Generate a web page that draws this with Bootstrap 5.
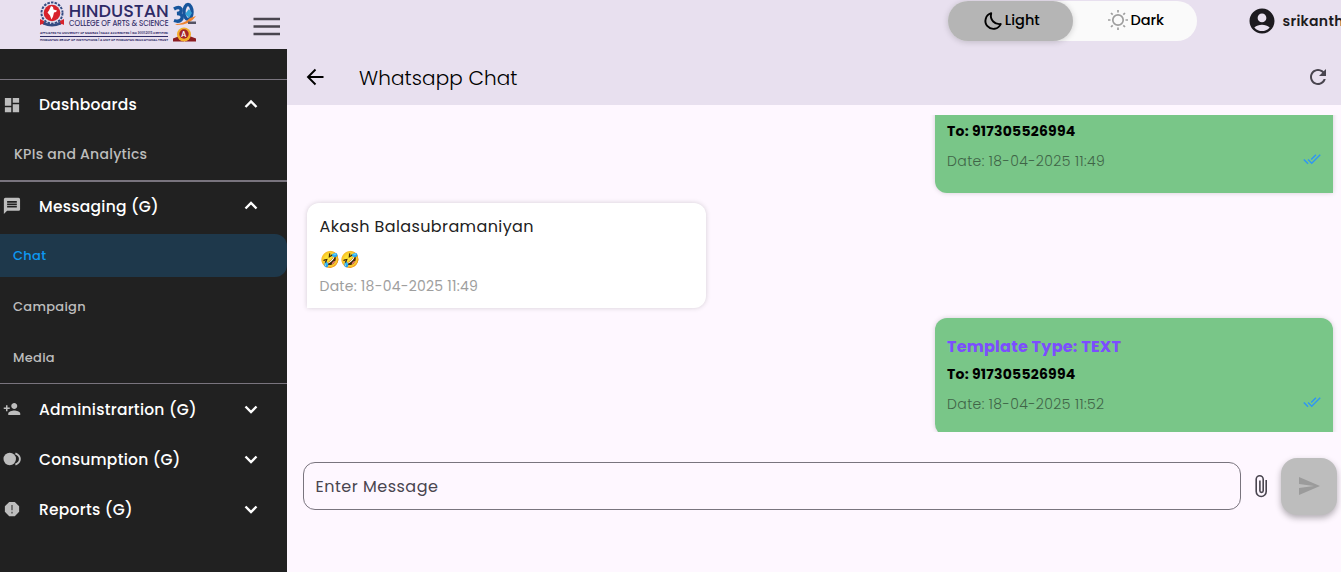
<!DOCTYPE html>
<html lang="en">
<head>
<meta charset="utf-8">
<meta name="viewport" content="width=device-width, initial-scale=1">
<title>Whatsapp Chat</title>
<link href="https://cdn.jsdelivr.net/npm/bootstrap@5.3.0/dist/css/bootstrap.min.css" rel="stylesheet">
<style>
body{font-family:Poppins,Inter,"Liberation Sans",sans-serif;background:#fef7ff;color:#000;line-height:1.5}
svg{display:block;flex:none}
.side{width:287px;flex:none;background:#212121}
.brandbar{height:49px;background:#e8e0ef;padding-left:39px}
.menu-btn{margin-left:50px;margin-top:6px}
.spacer{height:31px;border-bottom:1px solid #79747e}
.group-row{height:50px;padding:0 29px 0 3px;color:#fff;font-weight:500;font-size:15.5px;letter-spacing:.25px;text-decoration:none}
.group-row .ico{width:18px;margin-right:18px;color:#bdbdbd}
.group-row .chev{margin-left:auto}
.group-row.closed{padding-top:2px}
.sub{height:43px;margin-bottom:8px;padding-left:13px;color:#bdbdbd;font-size:13px;font-weight:500;letter-spacing:.28px;text-decoration:none;border-radius:0 12px 12px 0}
.sub.active{background:#1e384b;color:#0d99f2}
.kpi{height:50px;padding:0 14px 2px;color:#bdbdbd;font-size:14px;font-weight:500;letter-spacing:.26px;text-decoration:none}
.rule2{height:2px;background:#79747e}
.rule1{height:1px;background:#79747e}
.topbar{height:105px;background:#e8e0ef}
.toprow{height:49px;padding-top:1px}
.theme{width:249px;height:40px;border-radius:20px;background:#fafafa;margin-left:661px;flex:none;font-size:14.5px;font-weight:500}
.theme .opt{width:124.5px;height:40px;border-radius:20px}
.theme .on{background:#b5b5b5;box-shadow:0 1px 6px rgba(0,0,0,.18)}
.user{margin-left:50px;font-size:14px;font-weight:600;letter-spacing:.3px;color:#1d1b20;white-space:nowrap}
.titlebar{height:56px;padding:0 11px 0 19px}
.page-name{font-size:20px;font-weight:300;letter-spacing:.1px;margin-left:33px;margin-top:2px}
.chat{height:317px;margin-top:10px;overflow:hidden;padding:0 8px 0 8px}
.bubble{width:398.500px;flex:none;padding:13px 12px 13px 12.500px;box-shadow:0 0 5px rgba(0,0,0,.17)}
.out{background:#79c688;height:118px;padding-top:14px;border-radius:12px 12px 0 12px}
.in{background:#fff;height:105px;margin-left:12px;border-radius:12px 12px 12px 0;padding-top:12px}
.tpl{font-size:16px;font-weight:700;color:#7c4dff;line-height:30px;letter-spacing:.24px}
.to{font-size:14px;font-weight:700;line-height:25px;letter-spacing:.22px}
.date-row{font-size:14px;font-weight:300;color:#3f6447;line-height:21px;letter-spacing:.4px}
.out .date-row{margin-top:7px}
.who{font-size:16px;color:#212121;line-height:24px;letter-spacing:.39px}
.emo{font-size:16px;line-height:24px;margin-top:9px}
.in .date-row{color:#9e9e9e;font-weight:400;margin-top:4px;letter-spacing:.25px}
.composer{margin-top:25px;padding:0 4px 0 16px}
.msg{width:938px;height:48px;border:1px solid #79747e;border-radius:12px;background:transparent;padding:0 11.500px;font-size:16px;letter-spacing:.5px;color:#49454f;outline:none}
.msg::placeholder{color:#49454f;opacity:1}
.send{width:56px;height:57px;border:0;border-radius:16px;background:#bdbdbd;box-shadow:0 3px 6px rgba(0,0,0,.3);padding:0 0 1px;margin-left:12px}
</style>
</head>
<body class="overflow-hidden">
<div class="d-flex vh-100 overflow-hidden">
 <aside class="side d-flex flex-column">
  <div class="brandbar d-flex align-items-center">
   <svg width="158" height="45" viewBox="0 0 158 45" style="margin-top:-2px">
    <g>
     <circle cx="13" cy="12" r="10.500" fill="none" stroke="#344b82" stroke-width="2" stroke-dasharray="2.5 1.2"/>
     <circle cx="13" cy="12" r="9.300" fill="#dde3f2"/>
     <circle cx="13" cy="12" r="8.300" fill="#d8232c"/>
     <path d="M12 5l2 1 .5 2.500 3.500 1-1 1.500-2 .5-1 4-1.500 3-1.500-4-2.500-3 1.500-2z" fill="#fff"/>
     <path d="M1 18l4 2 1 4-3-1-2 1z" fill="#d8232c"/><path d="M25 18l-4 2-1 4 3-1 2 1z" fill="#d8232c"/>
     <path d="M5 20.500q8 5 16 0l1 3q-9 4-18 0z" fill="#344b82"/>
    </g>
    <g fill="#2e2a66" font-family="Poppins, Lato, sans-serif">
     <text x="29.800" y="15.500" font-size="18" font-weight="500" textLength="100" lengthAdjust="spacingAndGlyphs">HINDUSTAN</text>
     <text x="30" y="24.700" font-size="8.200" font-weight="400" textLength="99.500" lengthAdjust="spacingAndGlyphs" stroke="#2e2a66" stroke-width=".12">COLLEGE OF ARTS &amp; SCIENCE</text>
     <text x="1" y="32.500" font-size="3" font-weight="600" textLength="128" lengthAdjust="spacingAndGlyphs">AFFILIATED TO UNIVERSITY OF MADRAS | NAAC ACCREDITED | ISO 9001:2015 CERTIFIED</text>
     <rect x="1" y="35" width="128" height="1"/>
     <text x="1" y="40.300" font-size="3" font-weight="600" textLength="128" lengthAdjust="spacingAndGlyphs">HINDUSTAN GROUP OF INSTITUTIONS | A UNIT OF HINDUSTAN EDUCATIONAL TRUST</text>
    </g>
    <g fill="none" stroke="#17559c" stroke-width="3.400">
     <path d="M135 8q5-3 7 0 1 4-4 4.500 6 0 5 5-2 4-8 2"/>
     <ellipse cx="149" cy="11" rx="4" ry="7.500"/>
    </g>
    <path d="M146 13l4-5 3 4-3 5z" fill="#35a3d6"/>
    <path d="M136 23q9 0 15-6l6-2q-6 9-19 9z" fill="#ee8431"/>
    <path d="M149 20.500h8v2.500h-8z" fill="#555465"/>
    <path d="M134 37.500l8-3 4 6-12 0zM157 37.500l-8-3-4 6 12 0z" fill="#8c1d22"/>
    <circle cx="145" cy="33.500" r="7" fill="#f3ae2c"/>
    <circle cx="145" cy="33" r="4.700" fill="#a3232a"/>
    <text x="142.300" y="35.700" font-size="7" font-weight="700" fill="#fff" font-family="Lato, sans-serif">A</text>
   </svg>
   <svg class="menu-btn" width="40" height="40" viewBox="0 0 40 40"><path d="M6.500 11h26.500M6.500 18.500h26.500M6.500 26h26.500" stroke="#49454f" stroke-width="2.700"/></svg>
  </div>
  <div class="spacer"></div>
  <a class="group-row d-flex align-items-center" href="#"><span class="ico"><svg width="18" height="18" viewBox="0 0 24 24" fill="currentColor" style="margin-top:-1px"><path d="M2.500 13h8.500V2.500H2.500V13zm0 8.500h8.500v-6.500H2.500v6.500zm10.500 0h8.500V11h-8.500v10.500zm0-19v6.500h8.500V2.500h-8.500z"/></svg></span><span>Dashboards</span><svg class="chev" width="14" height="14" viewBox="0 0 14 14"><path d="M1.500 9L7 3.500l5.500 5.500" fill="none" stroke="#fff" stroke-width="2.400"/></svg></a>
  <a class="kpi d-flex align-items-center" href="#">KPIs and Analytics</a>
  <div class="rule2"></div>
  <a class="group-row d-flex align-items-center" href="#"><span class="ico"><svg width="18" height="18" viewBox="0 0 24 24" fill="currentColor" style="margin-top:-2px"><path d="M20 2H4c-1.100 0-1.990.9-1.990 2L2 22l4-4h14c1.100 0 2-.9 2-2V4c0-1.100-.9-2-2-2zm-2 12H6v-2h12v2zm0-3H6V9h12v2zm0-3H6V6h12v2z" transform="translate(-1 -1) scale(1.08)"/></svg></span><span>Messaging (G)</span><svg class="chev" width="14" height="14" viewBox="0 0 14 14"><path d="M1.500 8.500L7 3l5.500 5.500" fill="none" stroke="#fff" stroke-width="2.400"/></svg></a>
  <div style="height:2px"></div>
  <a class="sub active d-flex align-items-center" href="#">Chat</a>
  <a class="sub d-flex align-items-center" href="#">Campaign</a>
  <a class="sub d-flex align-items-center mb-0" href="#">Media</a>
  <div style="height:4px"></div>
  <div class="rule1"></div>
  <a class="group-row closed d-flex align-items-center" href="#"><span class="ico"><svg width="18" height="18" viewBox="0 0 24 24" fill="currentColor" style="margin-top:-2px"><path d="M15 12c2.210 0 4-1.790 4-4s-1.790-4-4-4-4 1.790-4 4 1.790 4 4 4zm-9-2V7H4v3H1v2h3v3h2v-3h3v-2H6zm9 4c-2.670 0-8 1.340-8 4v2h16v-2c0-2.660-5.330-4-8-4z"/></svg></span><span>Administrartion (G)</span><svg class="chev" width="14" height="14" viewBox="0 0 14 14" style="margin-top:-3px"><path d="M1.500 4.500L7 10l5.500-5.500" fill="none" stroke="#fff" stroke-width="2.400"/></svg></a>
  <a class="group-row closed d-flex align-items-center" href="#"><span class="ico"><svg width="18" height="18" viewBox="0 0 24 24" style="margin-top:-2px"><circle cx="9" cy="12" r="8.300" fill="currentColor"/><path d="M16.500 4.500Q22.500 7 22.500 12T16.500 19.500" fill="none" stroke="currentColor" stroke-width="2.500"/></svg></span><span>Consumption (G)</span><svg class="chev" width="14" height="14" viewBox="0 0 14 14" style="margin-top:-3px"><path d="M1.500 4.500L7 10l5.500-5.500" fill="none" stroke="#fff" stroke-width="2.400"/></svg></a>
  <a class="group-row closed d-flex align-items-center" href="#"><span class="ico"><svg width="18" height="18" viewBox="0 0 24 24" style="margin-top:-2px"><path d="M8.300 2.500h7.400l5.800 5.800v7.400l-5.800 5.800H8.300l-5.800-5.800V8.300z" fill="currentColor"/><path d="M12 6.500v7M12 15.500v2.500" stroke="#616161" stroke-width="2.200"/></svg></span><span>Reports (G)</span><svg class="chev" width="14" height="14" viewBox="0 0 14 14" style="margin-top:-3px"><path d="M1.500 4.500L7 10l5.500-5.500" fill="none" stroke="#fff" stroke-width="2.400"/></svg></a>
 </aside>

 <main class="flex-grow-1 overflow-hidden">
  <header class="topbar">
   <div class="toprow d-flex align-items-start overflow-hidden">
    <div class="theme d-flex">
     <div class="opt on d-flex align-items-center justify-content-center"><svg width="20" height="20" viewBox="0 0 20 20" style="margin:0 2px 0 2px"><path d="M8.200 2.200A8 8 0 1 0 17.800 13 C12 14 6.500 9 8.200 2.200z" fill="none" stroke="#000" stroke-width="1.900" stroke-linejoin="round"/></svg><span>Light</span></div>
     <div class="opt d-flex align-items-center justify-content-center"><svg width="22" height="22" viewBox="0 0 22 22" style="margin:-2px 0 0 2px"><circle cx="11" cy="11" r="5.200" fill="none" stroke="#9e9e9e" stroke-width="1.700"/><path d="M11 1v2.500M11 18.500v2.500M1 11h2.500M18.500 11h2.500M4 4l1.700 1.700M16.300 16.300l1.700 1.700M4 18l1.700-1.700M16.300 5.700l1.700-1.700" stroke="#9e9e9e" stroke-width="1.700"/></svg><span style="margin-left:1px">Dark</span></div>
    </div>
    <div class="user d-flex align-items-center" style="height:40px"><svg width="30" height="30" viewBox="0 0 24 24" fill="#1d1b20"><path d="M12 2C6.480 2 2 6.480 2 12s4.480 10 10 10 10-4.480 10-10S17.520 2 12 2zm0 4c1.930 0 3.500 1.570 3.500 3.500S13.930 13 12 13s-3.500-1.570-3.500-3.500S10.070 6 12 6zm0 14c-2.030 0-4.430-.82-6.140-2.880C7.550 15.800 9.680 15 12 15s4.450.8 6.140 2.120C16.430 19.180 14.030 20 12 20z"/></svg><span style="margin-left:5.500px">srikanth</span></div>
   </div>
   <div class="titlebar d-flex align-items-center">
    <svg width="20" height="20" viewBox="0 0 20 20"><path d="M17.500 10H3M9.500 2.500L2 10l7.500 7.500" fill="none" stroke="#000" stroke-width="1.900"/></svg>
    <span class="page-name">Whatsapp Chat</span>
    <svg class="ms-auto" width="24" height="24" viewBox="0 0 24 24" fill="#49454f"><path d="M17.650 6.350C16.200 4.900 14.210 4 12 4c-4.420 0-7.990 3.580-7.990 8s3.570 8 7.990 8c3.730 0 6.840-2.550 7.730-6h-2.080c-.82 2.330-3.040 4-5.650 4-3.310 0-6-2.690-6-6s2.690-6 6-6c1.660 0 3.140.69 4.220 1.780L13 11h7V4l-2.350 2.350z"/></svg>
   </div>
  </header>
  <section class="chat d-flex flex-column justify-content-end">
   <div class="bubble out ms-auto" style="margin-bottom:10px">
    <div class="tpl">Template Type: TEXT</div><div class="to">To: 917305526994</div>
    <div class="date-row d-flex justify-content-between">Date: 18-04-2025 11:49<svg width="18" height="18" viewBox="0 0 24 24" fill="#2f96f3" style="margin-top:-1px"><path d="M18 7l-1.410-1.410-6.340 6.340 1.410 1.410L18 7zm4.240-1.410L11.660 16.170 7.480 12l-1.410 1.410L11.660 19l12-12-1.420-1.410zM.41 13.410L6 19l1.410-1.410L1.830 12 .41 13.410z"/></svg></div>
   </div>
   <div class="bubble in" style="margin-bottom:10px">
    <div class="who">Akash Balasubramaniyan</div><div class="emo">🤣🤣</div><div class="date-row">Date: 18-04-2025 11:49</div>
   </div>
   <div class="bubble out ms-auto" style="margin-bottom:-4px">
    <div class="tpl">Template Type: TEXT</div><div class="to">To: 917305526994</div>
    <div class="date-row d-flex justify-content-between">Date: 18-04-2025 11:52<svg width="18" height="18" viewBox="0 0 24 24" fill="#2f96f3" style="margin-top:-1px"><path d="M18 7l-1.410-1.410-6.340 6.340 1.410 1.410L18 7zm4.240-1.410L11.660 16.170 7.480 12l-1.410 1.410L11.660 19l12-12-1.420-1.410zM.41 13.410L6 19l1.410-1.410L1.830 12 .41 13.410z"/></svg></div>
   </div>
  </section>
  <div class="composer d-flex align-items-center">
   <input class="msg" placeholder="Enter Message" aria-label="Message">
   <svg width="17" height="24" viewBox="0 0 17 24" style="margin-left:11px"><path d="M14.200 6v11.500a5 5 0 0 1-10 0V5.200a3.500 3.500 0 0 1 7 0v11.500a1.600 1.600 0 0 1-3.300 0V6.500" fill="none" stroke="#49454f" stroke-width="1.600"/></svg>
   <button class="send d-flex align-items-center justify-content-center" style="margin-top:1px"><svg width="24" height="24" viewBox="0 0 24 24" fill="#9b9b9b"><path d="M2.010 21L23 12 2.010 3 2 10l15 2-15 2z"/></svg></button>
  </div>
 </main>
</div>
<script src="https://cdn.jsdelivr.net/npm/bootstrap@5.3.0/dist/js/bootstrap.bundle.min.js"></script>
</body>
</html>
